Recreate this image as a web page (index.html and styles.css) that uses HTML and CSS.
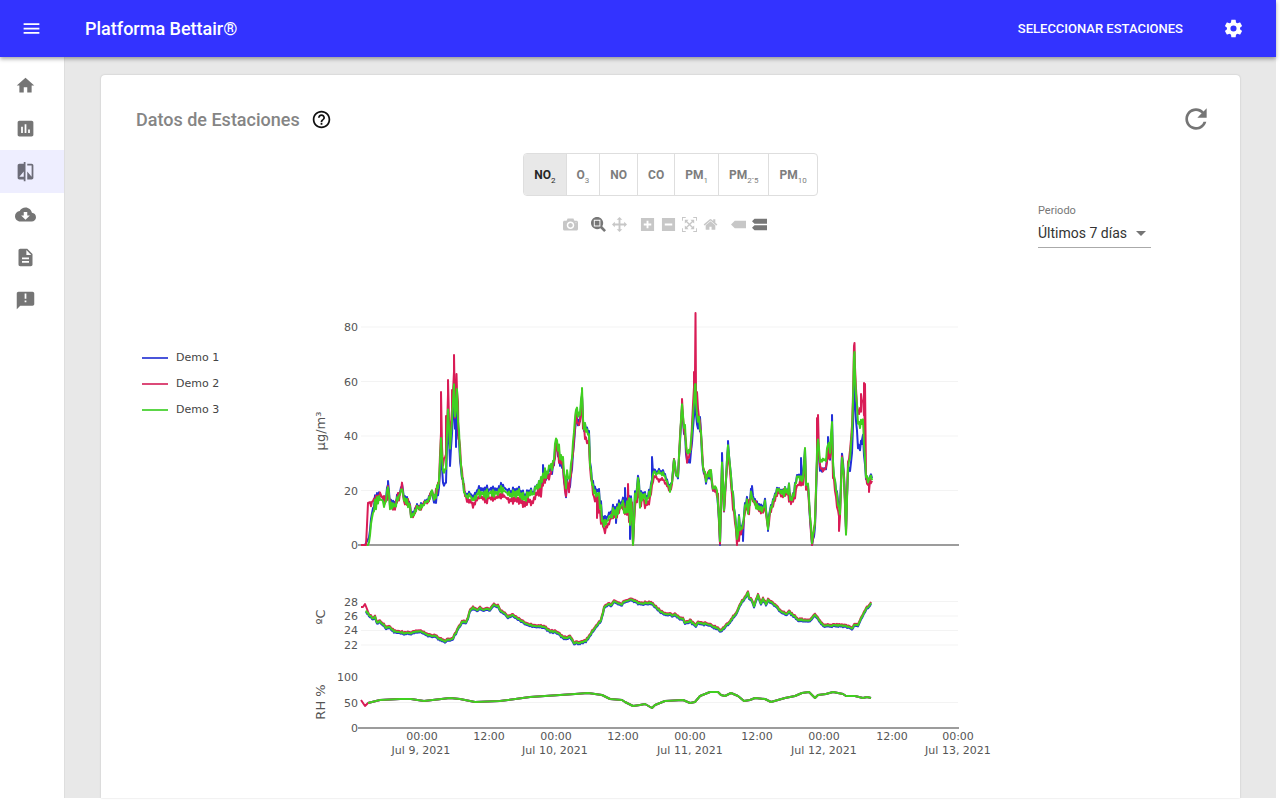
FILE: index.html
```html
<!DOCTYPE html>
<html lang="es">
<head>
<meta charset="utf-8">
<meta name="viewport" content="width=device-width, initial-scale=1">
<title>Platforma Bettair®</title>
<link rel="stylesheet" href="styles.css">
</head>
<body>
<div class="app">
  <header class="topbar">
    <button class="icon-button" type="button" aria-label="Menú"><svg class="icon" viewBox="0 0 24 24"><path d="M3 18h18v-2H3v2zm0-5h18v-2H3v2zm0-7v2h18V6H3z"/></svg></button>
    <h1 class="brand">Platforma Bettair®</h1>
    <button class="text-button" type="button">SELECCIONAR ESTACIONES</button>
    <button class="icon-button" type="button" aria-label="Ajustes"><svg class="icon" viewBox="0 0 24 24"><path d="M12 15.5A3.5 3.5 0 0 1 8.5 12 3.5 3.5 0 0 1 12 8.500a3.500 3.500 0 0 1 3.500 3.500 3.500 3.500 0 0 1-3.500 3.500m7.430-2.530c.04-.32.07-.64.07-.97s-.03-.66-.07-1l2.110-1.630c.19-.15.24-.42.12-.64l-2-3.460c-.12-.22-.39-.31-.61-.22l-2.490 1c-.52-.39-1.060-.73-1.690-.98l-.37-2.650A.506.506 0 0 0 14 2h-4c-.25 0-.46.18-.5.42l-.37 2.650c-.63.25-1.170.59-1.690.98l-2.490-1c-.22-.09-.49 0-.61.22l-2 3.460c-.13.22-.07.49.12.64L4.570 11c-.04.34-.07.67-.07 1s.03.65.07.97l-2.110 1.660c-.19.15-.25.42-.12.64l2 3.460c.12.22.39.3.61.22l2.490-1.010c.52.4 1.060.74 1.690.99l.37 2.650c.04.24.25.42.5.42h4c.25 0 .46-.18.5-.42l.37-2.650c.63-.26 1.170-.59 1.690-.99l2.490 1.010c.22.08.49 0 .61-.22l2-3.460c.12-.22.07-.49-.12-.64l-2.110-1.660z"/></svg></button>
  </header>
  <div class="body">
    <nav class="rail" aria-label="Principal">
      <a class="rail-item" href="#inicio" aria-label="Inicio"><svg class="icon" viewBox="0 0 24 24"><path d="M10 20v-6h4v6h5v-8h3L12 3 2 12h3v8z"/></svg></a>
      <a class="rail-item" href="#panel" aria-label="Panel"><svg class="icon" viewBox="0 0 24 24"><path d="M19 3H5c-1.100 0-2 .9-2 2v14c0 1.100.9 2 2 2h14c1.100 0 2-.9 2-2V5c0-1.100-.9-2-2-2zM9 17H7v-7h2v7zm4 0h-2V7h2v10zm4 0h-2v-4h2v4z"/></svg></a>
      <a class="rail-item active" href="#comparar" aria-label="Comparar"><svg class="icon" viewBox="0 0 24 24"><path d="M10 3H5c-1.100 0-2 .9-2 2v14c0 1.100.9 2 2 2h5v2h2V1h-2v2zm0 15H5l5-6v6zm9-15h-5v2h5v13l-5-6v9h5c1.100 0 2-.9 2-2V5c0-1.100-.9-2-2-2z"/></svg></a>
      <a class="rail-item" href="#descargas" aria-label="Descargas"><svg class="icon" viewBox="0 0 24 24"><path d="M19.350 10.040C18.670 6.590 15.640 4 12 4 9.110 4 6.600 5.640 5.350 8.040 2.340 8.360 0 10.910 0 14c0 3.310 2.690 6 6 6h13c2.760 0 5-2.240 5-5 0-2.640-2.050-4.780-4.650-4.960zM17 13l-5 5-5-5h3V9h4v4h3z"/></svg></a>
      <a class="rail-item" href="#informes" aria-label="Informes"><svg class="icon" viewBox="0 0 24 24"><path d="M14 2H6c-1.100 0-2 .9-2 2v16c0 1.100.9 2 2 2h12c1.100 0 2-.9 2-2V8l-6-6zm2 16H8v-2h8v2zm0-4H8v-2h8v2zm-3-5V3.500L18.500 9H13z"/></svg></a>
      <a class="rail-item" href="#avisos" aria-label="Avisos"><svg class="icon" viewBox="0 0 24 24"><path d="M20 2H4c-1.100 0-2 .9-2 2v18l4-4h14c1.100 0 2-.9 2-2V4c0-1.100-.9-2-2-2zm-7 12h-2v-2h2v2zm0-4h-2V4h2v6z"/></svg></a>
    </nav>
    <main class="content">
      <section class="card">
        <div class="card-head">
          <h2 class="card-title">Datos de Estaciones</h2>
          <button class="help" type="button" aria-label="Ayuda"><svg class="icon" viewBox="0 0 24 24"><path d="M11 18h2v-2h-2v2zm1-16C6.480 2 2 6.480 2 12s4.480 10 10 10 10-4.480 10-10S17.520 2 12 2zm0 18c-4.410 0-8-3.590-8-8s3.590-8 8-8 8 3.590 8 8-3.590 8-8 8zm0-14c-2.210 0-4 1.790-4 4h2c0-1.100.9-2 2-2s2 .9 2 2c0 2-3 1.750-3 5h2c0-2.250 3-2.500 3-5 0-2.210-1.790-4-4-4z"/></svg></button>
          <button class="refresh" type="button" aria-label="Actualizar"><svg class="icon" viewBox="0 0 24 24"><path d="M17.650 6.350C16.200 4.900 14.210 4 12 4c-4.420 0-7.990 3.580-7.990 8s3.570 8 7.990 8c3.730 0 6.840-2.550 7.730-6h-2.080c-.82 2.330-3.040 4-5.650 4-3.310 0-6-2.690-6-6s2.690-6 6-6c1.660 0 3.140.69 4.220 1.780L13 11h7V4l-2.350 2.350z"/></svg></button>
        </div>
        <div class="toggle-row">
          <div class="toggle" role="group" aria-label="Contaminante">
            <button class="toggle-item selected" type="button" aria-pressed="true">NO<span class="low">2</span></button>
            <button class="toggle-item" type="button">O<span class="low">3</span></button>
            <button class="toggle-item" type="button">NO</button>
            <button class="toggle-item" type="button">CO</button>
            <button class="toggle-item" type="button">PM<span class="low">1</span></button>
            <button class="toggle-item" type="button">PM<span class="low">2<span class="point">-</span>5</span></button>
            <button class="toggle-item" type="button">PM<span class="low">10</span></button>
          </div>
        </div>
        <div class="plot-area">
          <ul class="legend">
            <li class="legend-item"><span class="swatch blue"></span>Demo 1</li>
            <li class="legend-item"><span class="swatch red"></span>Demo 2</li>
            <li class="legend-item"><span class="swatch green"></span>Demo 3</li>
          </ul>
          <div class="plot">
            <div class="modebar">
              <div class="mode-group">
                <button class="mode" type="button" aria-label="Descargar imagen"><svg viewBox="0 0 1000 1000"><path transform="matrix(1 0 0 -1 0 850)" d="m500 450c-83 0-150-67-150-150 0-83 67-150 150-150 83 0 150 67 150 150 0 83-67 150-150 150z m400 150h-120c-16 0-34 13-39 29l-31 93c-6 15-23 28-40 28h-340c-16 0-34-13-39-28l-31-94c-6-15-23-28-40-28h-120c-55 0-100-45-100-100v-450c0-55 45-100 100-100h800c55 0 100 45 100 100v450c0 55-45 100-100 100z m-400-550c-138 0-250 112-250 250 0 138 112 250 250 250 138 0 250-112 250-250 0-138-112-250-250-250z m365 380c-19 0-35 16-35 35 0 19 16 35 35 35 19 0 35-16 35-35 0-19-16-35-35-35z"/></svg></button>
              </div>
              <div class="mode-group">
                <button class="mode on" type="button" aria-label="Zoom"><svg viewBox="0 0 1000 1000"><path transform="matrix(1 0 0 -1 0 850)" d="m1000-25l-250 251c40 63 63 138 63 218 0 224-182 406-407 406-224 0-406-182-406-406s183-406 407-406c80 0 155 22 218 62l250-250 125 125z m-812 250l0 438 437 0 0-438-437 0z m62 375l313 0 0-312-313 0 0 312z"/></svg></button>
                <button class="mode" type="button" aria-label="Desplazar"><svg viewBox="0 0 1000 1000"><path transform="matrix(1 0 0 -1 0 850)" d="m1000 350l-187 188 0-125-250 0 0 250 125 0-188 187-187-187 125 0 0-250-250 0 0 125-188-188 186-187 0 125 252 0 0-250-125 0 187-188 188 188-125 0 0 250 250 0 0-126 187 188z"/></svg></button>
              </div>
              <div class="mode-group">
                <button class="mode" type="button" aria-label="Acercar"><svg viewBox="0 0 875 1000"><path transform="matrix(1 0 0 -1 0 850)" d="m1 787l0-875 875 0 0 875-875 0z m687-500l-187 0 0-187-125 0 0 187-188 0 0 125 188 0 0 187 125 0 0-187 187 0 0-125z"/></svg></button>
                <button class="mode" type="button" aria-label="Alejar"><svg viewBox="0 0 875 1000"><path transform="matrix(1 0 0 -1 0 850)" d="m0 788l0-876 875 0 0 876-875 0z m688-500l-500 0 0 125 500 0 0-125z"/></svg></button>
                <button class="mode" type="button" aria-label="Autoescala"><svg viewBox="0 0 1000 1000"><path transform="matrix(1 0 0 -1 0 850)" d="m250 850l-187 0-63 0 0-62 0-188 63 0 0 188 187 0 0 62z m688 0l-188 0 0-62 188 0 0-188 62 0 0 188 0 62-62 0z m-875-938l0 188-63 0 0-188 0-62 63 0 187 0 0 62-187 0z m875 188l0-188-188 0 0-62 188 0 62 0 0 62 0 188-62 0z m-125 188l-1 0-93-94-156 156 156 156 92-93 2 0 0 250-250 0 0-2 93-92-156-156-156 156 94 92 0 2-250 0 0-250 0 0 93 93 157-156-157-156-93 94 0 0 0-250 250 0 0 0-94 93 156 157 156-157-93-93 0 0 250 0 0 250z"/></svg></button>
                <button class="mode" type="button" aria-label="Restablecer"><svg viewBox="0 0 928 1000"><path transform="matrix(1 0 0 -1 0 850)" d="m786 296v-267q0-15-11-26t-25-10h-214v214h-143v-214h-214q-15 0-25 10t-11 26v267q0 1 0 2t0 2l321 264 321-264q1-1 1-4z m124 39l-34-41q-5-5-12-6h-2q-7 0-12 3l-386 322-386-322q-7-4-13-4-7 2-12 7l-35 41q-4 5-3 13t6 12l401 334q18 15 42 15t43-15l136-114v109q0 8 5 13t13 5h107q8 0 13-5t5-13v-227l122-102q5-5 6-12t-4-13z"/></svg></button>
              </div>
              <div class="mode-group">
                <button class="mode" type="button" aria-label="Dato más cercano"><svg viewBox="0 0 1500 1000"><path transform="matrix(1 0 0 -1 0 850)" d="m375 725l0 0-375-375 375-374 0-1 1125 0 0 750-1125 0z"/></svg></button>
                <button class="mode on" type="button" aria-label="Comparar datos"><svg viewBox="0 0 1125 1000"><path transform="matrix(1 0 0 -1 0 850)" d="m187 786l0 2-187-188 188-187 0 0 937 0 0 373-938 0z m0-499l0 1-187-188 188-188 0 0 937 0 0 376-938-1z"/></svg></button>
              </div>
            </div>
            <svg class="chart" viewBox="300 290 700 480" role="img" aria-label="Series de NO2, temperatura y humedad">
              <path class="grid" d="M361 327H958M361 381.500H958M361 436H958M361 490.500H958M361 601.500H958M361 616H958M361 630.500H958M361 645H958M361 702.500H958"/>
              <path class="zero" d="M358 545H959M358 728H959"/>
              <g id="series"></g>
              <g class="tick end">
                <text x="358" y="331">80</text><text x="358" y="386">60</text><text x="358" y="440">40</text><text x="358" y="495">20</text><text x="358" y="549">0</text>
                <text x="358" y="606">28</text><text x="358" y="620">26</text><text x="358" y="634">24</text><text x="358" y="649">22</text>
                <text x="358" y="681">100</text><text x="358" y="707">50</text><text x="358" y="732">0</text>
              </g>
              <g class="tick middle">
                <text x="422" y="740">00:00</text><text x="489" y="740">12:00</text><text x="556" y="740">00:00</text><text x="623" y="740">12:00</text><text x="690" y="740">00:00</text><text x="757" y="740">12:00</text><text x="824" y="740">00:00</text><text x="892" y="740">12:00</text><text x="958" y="740">00:00</text>
                <text x="421" y="754">Jul 9, 2021</text><text x="555" y="754">Jul 10, 2021</text><text x="690" y="754">Jul 11, 2021</text><text x="824" y="754">Jul 12, 2021</text><text x="958" y="754">Jul 13, 2021</text>
              </g>
              <g class="axis-title middle">
                <text transform="translate(325 431) rotate(-90)">μg/m³</text>
                <text transform="translate(325 617) rotate(-90)">ºC</text>
                <text transform="translate(325 702) rotate(-90)">RH %</text>
              </g>
            </svg>
          </div>
          <div class="period">
            <label class="period-label" for="periodo">Periodo</label>
            <div class="select-box">
              <select class="period-select" id="periodo"><option>Últimos 7 días</option></select>
              <svg class="caret" viewBox="0 0 10 5" aria-hidden="true"><path d="M0 0h10L5 5z"/></svg>
            </div>
          </div>
        </div>
      </section>
    </main>
  </div>
</div>
<script src="chart.js"></script>
</body>
</html>
```
FILE: styles.css
```css
* { box-sizing: border-box; }
body { margin: 0; background: #fff; font-family: Roboto, "Liberation Sans", sans-serif; color: #333; }
button { border: 0; padding: 0; background: none; font: inherit; color: inherit; cursor: pointer; }
.app { min-height: 100vh; padding: 0 4px 5px 0; display: flex; flex-direction: column; }
.topbar { position: relative; height: 57px; padding: 0 32px 0 21px; display: flex; align-items: center; background: #3333ff; color: #fff; box-shadow: 0 2px 4px rgba(0,0,0,.35); }
.icon { display: block; width: 21px; height: 21px; fill: currentColor; }
.brand { flex: 1; margin: 0 0 0 43px; font-size: 18px; font-weight: 500; }
.text-button { margin-right: 40px; font-size: 13px; font-weight: 500; }
.body { flex: 1; display: flex; }
.rail { width: 65px; padding-top: 7px; border-right: 1px solid #dedede; background: #fff; }
.rail-item { height: 43px; padding-left: 15px; display: flex; align-items: center; color: #757575; }
.rail-item.active { background: #eeeeff; color: #6c6c78; }
.content { flex: 1; min-width: 0; padding: 18px 36px 0; background: #e8e8e8; display: flex; }
.card { flex: 1; min-width: 0; padding: 28px 35px 28px; border-radius: 4px 4px 0 0; background: #fff; box-shadow: 0 0 2px rgba(0,0,0,.2); }
.card-head { height: 32px; display: flex; align-items: center; }
.card-title { margin: 0 11px 0 0; font-size: 18px; font-weight: 500; color: #858585; }
.help { color: #111; }
.refresh { margin-left: auto; margin-right: -7px; color: #757575; }
.refresh .icon { width: 32px; height: 32px; }
.toggle-row { margin-top: 18px; display: flex; justify-content: center; }
.toggle { display: flex; border: 1px solid #dedede; border-radius: 4px; overflow: hidden; }
.toggle-item { height: 41px; padding: 0 10px; font-size: 12px; font-weight: 700; color: #7d7d7d; white-space: nowrap; }
.toggle-item + .toggle-item { border-left: 1px solid #dedede; }
.toggle-item.selected { background: #e8e8e8; color: #262626; }
.low { position: relative; top: 4px; font-size: 8px; font-weight: 400; }
.point { position: relative; top: -2px; }
.plot-area { display: grid; grid-template-columns: 164px minmax(0, 1fr) 205px; align-items: start; }
.legend { margin: 0; padding: 149px 0 0 6px; list-style: none; font: 11px/26px "DejaVu Sans", sans-serif; color: #444; }
.legend-item { display: flex; align-items: center; gap: 8px; }
.swatch { width: 26px; height: 2px; }
.swatch.blue { background: #4a55da; }
.swatch.red { background: #dc4a78; }
.swatch.green { background: #5cd648; }
.modebar { height: 56px; padding: 0 0 0 30px; display: flex; justify-content: center; align-items: center; gap: 7px; }
.mode-group { display: flex; }
.mode { width: 21px; height: 21px; display: flex; justify-content: center; align-items: center; color: #c7c7c7; }
.mode.on { color: #777; }
.mode svg { display: block; width: 15px; height: 15px; fill: currentColor; }
.chart { display: block; width: 100%; margin-top: 38px; }
.grid { fill: none; stroke: #f3f3f3; }
.zero { fill: none; stroke: #9c9c9c; stroke-width: 2; }
.tick { font: 11px "DejaVu Sans", sans-serif; fill: #555; }
.axis-title { font: 13px "DejaVu Sans", sans-serif; fill: #555; }
.end { text-anchor: end; }
.middle { text-anchor: middle; }
.line { fill: none; stroke-width: 2; stroke-linejoin: round; }
.line.blue { stroke: #2230d8; }
.line.red { stroke: #d91c56; }
.line.green { stroke: #40d020; }
.period { margin: 8px 54px 0 38px; }
.period-label { display: block; font-size: 11px; line-height: 14px; color: #777; }
.select-box { position: relative; border-bottom: 1px solid #aaa; }
.period-select { display: block; width: 100%; height: 29px; padding: 0; border: 0; appearance: none; background: none; font: 14px Roboto, sans-serif; color: #333; }
.caret { position: absolute; right: 5px; top: 13px; width: 10px; height: 5px; fill: #757575; pointer-events: none; }
```
FILE: chart.js
```js
// Each entry is x, upper edge, lower edge of the measured band.
const band = [
367,545,545, 369,540,545, 372,515,521, 374,498,520, 377,495,512, 380,492,504, 383,496,506, 385,500,508, 387,490,502, 388,486,488,
390,500,510, 393,503,510, 395,503,511, 398,490,503, 399,493,503, 402,482,490, 404,496,506, 407,496,508, 410,503,508, 411,515,519,
414,512,517, 417,502,510, 419,505,512, 422,502,511, 425,499,505, 428,499,505, 432,488,493, 434,496,503, 436,488,500, 439,478,490,
441,438,440, 443,468,478, 446,460,475, 448,405,410, 450,440,458, 452,410,430, 454,380,385, 455,415,428, 457,388,400, 459,430,445,
461,462,470, 463,475,488, 465,490,498, 467,493,502, 470,492,500, 473,498,504, 477,490,500, 479,486,498, 485,490,499, 490,488,498,
496,489,497, 502,485,493, 507,488,498, 510,490,500, 515,489,498, 519,489,498, 525,494,503, 528,488,500, 533,490,500, 536,483,492,
541,477,490, 544,465,480, 548,466,476, 552,455,472, 554,452,463, 556,435,440, 558,440,452, 560,448,460, 563,455,462, 564,470,475,
566,485,492, 567,464,480, 569,478,485, 571,462,470, 573,440,448, 576,403,410, 578,412,420, 580,410,418, 582,388,392, 583,410,430,
586,428,434, 589,432,440, 590,455,470, 592,475,485, 594,485,498, 597,488,500, 598,485,500, 600,500,512, 602,510,522, 604,520,528,
607,518,524, 610,514,519, 613,507,517, 616,508,520, 619,503,512, 623,500,508, 625,495,526, 628,490,520, 630,500,525, 632,497,515,
633,545,545, 635,492,505, 637,488,500, 638,476,480, 640,490,508, 643,490,500, 646,495,508, 650,490,500, 652,478,485, 654,468,475,
657,471,476, 663,470,476, 667,480,484, 670,488,492, 672,480,486, 674,458,460, 676,472,477, 678,474,477, 680,435,440, 682,402,406,
684,425,430, 685,420,438, 687,450,460, 689,445,456, 691,440,450, 693,415,420, 695,383,388, 697,415,420, 699,415,425, 701,430,440,
703,465,472, 706,475,483, 709,470,475, 711,470,478, 713,488,490, 716,485,490, 718,490,505, 720,540,542, 722,461,463, 724,505,513,
726,475,480, 728,443,448, 730,462,470, 732,485,495, 734,500,515, 736,520,530, 737,538,542, 739,515,530, 741,525,532, 743,518,530,
745,505,510, 747,499,508, 749,498,520, 751,490,500, 753,495,505, 757,502,510, 760,505,514, 763,507,512, 765,500,508, 768,525,530,
770,508,514, 773,500,505, 776,490,497, 778,486,491, 782,490,496, 785,481,498, 789,482,498, 791,494,502, 794,488,498, 797,475,480,
800,473,480, 803,475,482, 805,447,450, 806,480,490, 808,480,488, 810,500,530, 812,540,545, 815,520,525, 817,450,460, 818,436,440,
820,456,464, 823,457,463, 826,455,463, 828,438,445, 830,445,455, 832,420,424, 833,460,470, 836,485,495, 838,500,510, 840,512,515,
842,454,458, 844,475,480, 846,530,535, 848,465,470, 850,455,460, 852,430,435, 853,400,405, 854,352,357, 856,380,410, 858,418,428,
860,420,430, 863,418,424, 864,440,445, 866,470,480, 868,480,485, 870,472,482, 872,475,483];

// Offset of a station from the band, as x, dy pairs, then its own peaks as x, y pairs.
const stations = {
  blue: {
    shift: [361,-6, 385,-3, 430,-1, 445,14, 458,12, 463,-1, 480,-4, 530,-2, 550,3, 575,12, 588,-3, 600,-4, 640,-2, 665,-2, 676,0, 681,4, 695,14, 700,2, 720,2, 750,-3, 790,0, 800,-2, 815,6, 822,10, 832,6, 838,-4, 847,-4, 851,18, 855,28, 862,20, 866,2, 872,-2],
    peaks: [388,481, 402,484, 450,466, 456,447, 543,465, 616,523, 625,488, 630,539, 652,457, 700,417, 720,545, 722,453, 728,441, 743,541, 752,486, 768,531, 801,458, 828,437, 832,415, 858,444, 862,440]
  },
  red: {
    shift: [361,-14, 376,-5, 390,0, 435,0, 445,-12, 458,-8, 462,0, 470,4, 520,6, 550,7, 574,8, 590,7, 605,7, 615,1, 640,4, 650,3, 662,7, 670,1, 681,0, 690,7, 693,-15, 700,-4, 715,2, 740,6, 750,0, 780,3, 800,8, 815,0, 822,10, 832,10, 840,4, 850,-6, 857,-8, 861,-16, 864,-25, 866,2, 872,3],
    peaks: [441,392, 446,416, 448,380, 452,390, 454,355, 456.500,374, 458.500,439, 597,518, 628,484, 682,399, 694,372, 695.500,313, 697,392, 737,544, 739,541, 812,545, 817,418, 818,415, 839,531, 846,534, 854.500,343, 861,394, 864,383, 865,384, 869,492]
  },
  green: { shift: [361,0, 872,0], peaks: [582,388, 633,545, 695.500,384, 854.500,352] }
};

const temperature = [366,611,370,616,373,618,375,617,377,623,380,621,383,624,386,628,389,627,392,630,396,632,400,632,404,633,410,633,415,632,418,631,423,632,430,636,434,635,439,639,445,641,453,638,458,629,462,622,466,622,468,618,470,610,473,608,477,610,480,608,484,610,490,609,494,605,498,606,501,612,505,613,508,617,512,615,518,619,526,624,535,626,544,627,550,631,556,632,564,638,570,637,574,643,580,643,586,641,592,632,597,625,601,621,604,608,608,604,612,605,614,601,618,604,622,604,625,601,633,600,640,604,645,603,652,603,655,606,660,611,665,614,672,615,676,615,680,619,683,618,685,623,690,621,694,624,696,626,698,623,706,624,717,628,721,631,726,626,731,620,737,612,742,601,745,598,748,593,749,598,752,600,754,606,757,598,758,595,761,604,763,599,766,604,768,600,772,603,776,606,780,611,786,614,789,612,795,617,799,620,805,620,810,620,815,615,819,620,823,625,830,626,835,625,845,626,852,628,855,624,858,625,862,617,866,609,871,603];
const humidity = [365,706,368,703,380,700,400,699,411,699,424,701,450,698,460,699,475,702,500,701,530,697,560,695,575,694,588,693,602,695,610,699,622,700,625,702,633,706,640,705,645,704,652,708,655,705,665,701,683,700,690,703,695,702,700,696,710,692,718,692,721,695,725,696,731,693,738,696,744,701,750,700,755,698,765,699,771,702,785,698,795,696,802,693,809,692,815,698,818,695,826,694,833,692,843,694,846,696,855,696,863,698,867,697,871,698];

const group = document.getElementById("series");

function draw(points, color) {
  const line = document.createElementNS("http://www.w3.org/2000/svg", "polyline");
  line.setAttribute("class", "line " + color);
  line.setAttribute("points", points.map(p => p.join(",")).join(" "));
  group.append(line);
}

function at(list, x) {
  for (let i = 0; i < list.length - 2; i += 2) {
    if (x <= list[i + 2]) {
      const t = Math.max(0, (x - list[i]) / (list[i + 2] - list[i]));
      return list[i + 1] + t * (list[i + 3] - list[i + 1]);
    }
  }
  return list[list.length - 1];
}

function pairs(list, dy) {
  const out = [];
  for (let i = 0; i < list.length; i += 2) out.push([list[i], list[i + 1] + dy]);
  return out;
}

// Repeatable value between 0 and 1.
function noise(n) {
  const v = Math.sin(n * 127.1) * 43758.5453;
  return v - Math.floor(v);
}

// Slow trend with a small ripple between the samples.
function ripple(list, dy, size) {
  const out = [];
  for (let x = list[0]; x <= 871; x += 1) {
    out.push([x, at(list, x) + dy + (noise(x) * 2 - 1) * size]);
  }
  return out;
}

const tops = [], bottoms = [];
for (let i = 0; i < band.length; i += 3) {
  tops.push(band[i], band[i + 1]);
  bottoms.push(band[i], band[i + 2]);
}
const starts = { blue: [[365,545]], red: [[361,545],[366,545],[367,525],[368,503]], green: [] };

for (const [color, station] of Object.entries(stations)) {
  const points = [...starts[color]];
  const from = color === "green" ? 367 : color === "blue" ? 369 : 370;
  let upper = true;
  for (let x = from; x <= 872; x += 1) {
    const early = color === "red" && x < 378;
    const edges = early ? [499, 508] : [at(tops, x), at(bottoms, x)];
    const pull = noise(x) * 0.55;
    const place = upper ? pull : 1 - pull;
    const dy = early ? 370 - x : at(station.shift, x);
    points.push([x, Math.min(545, edges[0] + (edges[1] - edges[0]) * place + dy)]);
    upper = !upper;
  }
  for (let i = 0; i < station.peaks.length; i += 2) points.push([station.peaks[i] + 0.01, station.peaks[i + 1]]);
  points.sort((a, b) => a[0] - b[0]);
  draw(points, color);
}

draw(ripple(temperature, 1, 0.8), "blue");
draw([[361,607],[363,607],[365,604],[367,609], ...ripple(temperature, -1, 0.8).slice(2)], "red");
draw(ripple(temperature, 0, 0.8), "green");
draw(pairs(humidity, 0).slice(1), "blue");
draw([[361,700], ...pairs(humidity, 0)], "red");
draw(pairs(humidity, 0).slice(1), "green");
```
